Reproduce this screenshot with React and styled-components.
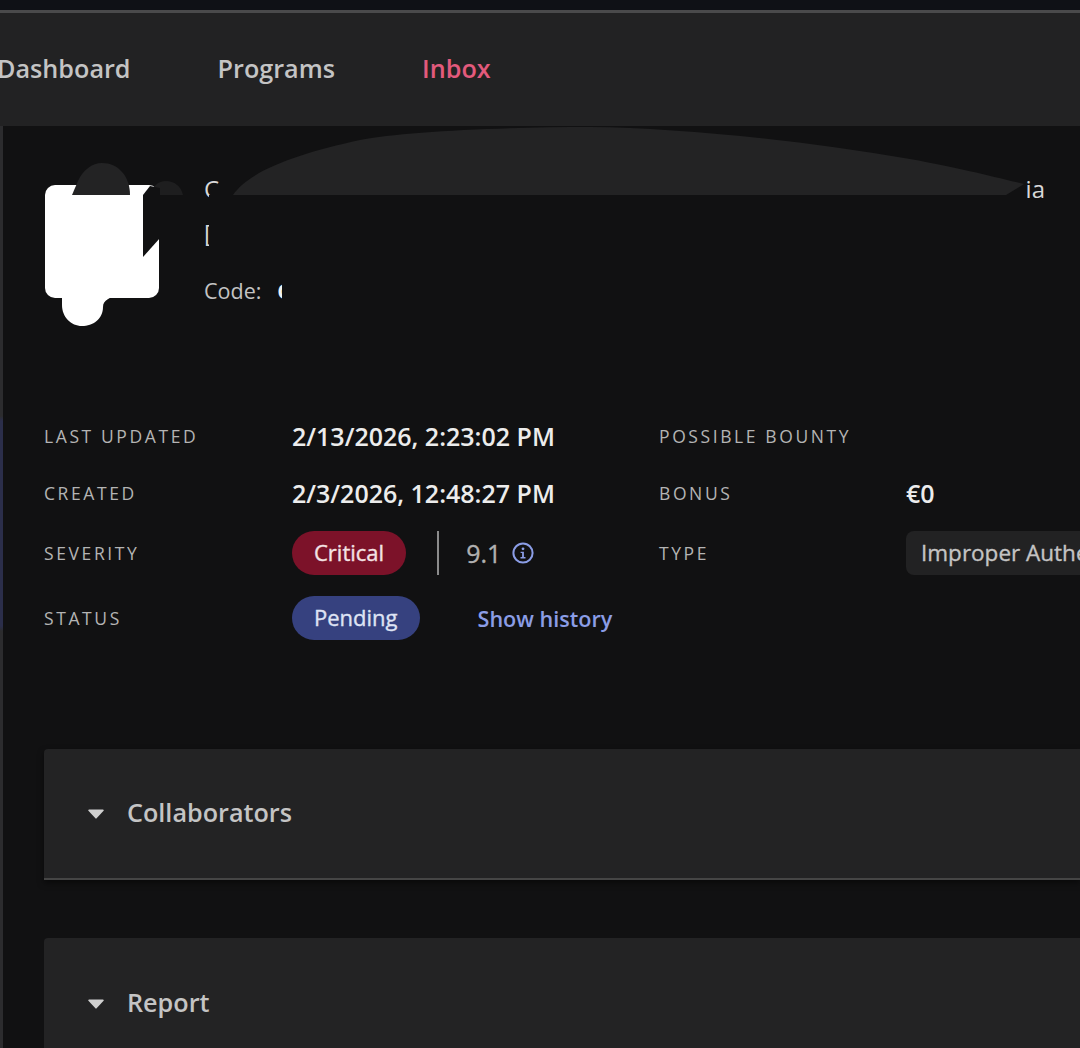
import React from "react";
import styled, { createGlobalStyle } from "styled-components";

const GlobalStyle = createGlobalStyle`
  html, body {
    margin: 0;
    background: #111112;
  }
  body {
    font-family: "Open Sans", "Noto Sans", sans-serif;
  }
`;

const Page = styled.div`
  width: 1080px;
  height: 1048px;
  overflow: hidden;
  display: flex;
  flex-direction: column;
`;

const TopStrip = styled.div`
  height: 10px;
  flex: none;
  background: #0f1116;
`;

const NavBar = styled.nav`
  height: 109px;
  flex: none;
  display: flex;
  align-items: center;
  gap: 87px;
  padding-bottom: 4px;
  border-top: 3px solid #4a4a4b;
  background: #222223;
`;

const NavLink = styled.a`
  font-size: 25.2px;
  font-weight: 600;
  color: ${(p) => (p.$active ? "#e35a7c" : "#c4c4c4")};

  &:first-child {
    margin-left: -3px;
  }
`;

const Body = styled.div`
  flex: 1;
  display: flex;
`;

const Rail = styled.div`
  width: 3px;
  flex: none;
  background: linear-gradient(
    #2c2c2e 0,
    #2c2c2e 290px,
    #2b2e4a 295px,
    #2b2e4a 500px,
    #2c2c2e 505px
  );
`;

const Content = styled.main`
  position: relative;
  flex: 1;
  min-width: 0;
  padding-left: 41px;
`;

const Hero = styled.header`
  display: flex;
  gap: 45px;
  padding-top: 59px;
  padding-left: 1px;
  height: 233px;
  box-sizing: border-box;
`;

const LogoMark = styled.svg`
  display: block;
  flex: none;
  width: 114px;
  height: 142px;
`;

const HeroText = styled.div`
  flex: 1;
  min-width: 0;
  display: flex;
  flex-direction: column;
  color: #d8d8d8;
`;

const TitleLine = styled.div`
  display: flex;
  justify-content: space-between;
  height: 44px;
  padding-right: 35px;
  margin-top: -12px;
  font-size: 24px;
  line-height: 32px;
`;

const SubLine = styled.div`
  height: 60px;
  font-size: 24px;
  line-height: 32px;
`;

const CodeLine = styled.div`
  display: flex;
  gap: 16px;
  font-size: 21.5px;
  line-height: 28px;
  color: #c4c4c4;
`;

const CodeStart = styled.span`
  font-weight: 700;
  color: #f0f0f0;
`;

const Redactions = styled.svg`
  position: absolute;
  left: -3px;
  top: 0;
  width: 1080px;
  height: 220px;
  pointer-events: none;
`;

const Details = styled.section`
  display: grid;
  grid-template-columns: 248px 367px 247px 1fr;
  grid-template-rows: 36px 35px 44px 44px;
  row-gap: 21px;
  margin-top: 59px;
  align-items: center;
`;

const Label = styled.div`
  font-size: 17.5px;
  letter-spacing: 2.6px;
  color: #b4b4b4;
  white-space: nowrap;
`;

const Value = styled.div`
  font-size: 25px;
  font-weight: 600;
  color: #ececec;
  white-space: nowrap;
`;

const ValueRow = styled.div`
  display: flex;
  align-items: center;
`;

const Pill = styled.span`
  display: inline-flex;
  align-items: center;
  height: 44px;
  padding: 0 22px 2px;
  box-sizing: border-box;
  border-radius: 22px;
  font-size: 22px;
  -webkit-text-stroke: 0.35px currentColor;
  background: ${(p) => (p.$tone === "critical" ? "#7c1229" : "#36417f")};
  color: ${(p) => (p.$tone === "critical" ? "#f4e3e5" : "#dfe3f4")};
`;

const Divider = styled.span`
  width: 2px;
  height: 44px;
  margin: 0 27px 0 31px;
  background: #8b8b8b;
`;

const Score = styled.span`
  font-size: 25px;
  -webkit-text-stroke: 0.35px currentColor;
  color: #b0b0b0;
`;

const InfoIcon = styled.svg`
  width: 22px;
  height: 22px;
  margin-left: 11px;
`;

const HistoryLink = styled.a`
  margin-left: 58px;
  font-size: 21.6px;
  font-weight: 600;
  color: #8b9de6;
`;

const TypeChip = styled.div`
  display: flex;
  align-items: center;
  height: 44px;
  padding: 0 15px 2px;
  box-sizing: border-box;
  border-radius: 8px 0 0 8px;
  background: #222223;
  font-size: 22.5px;
  -webkit-text-stroke: 0.35px currentColor;
  color: #c4c4c4;
  white-space: nowrap;
  overflow: hidden;
`;

const Sections = styled.div`
  display: flex;
  flex-direction: column;
  gap: 58px;
  margin-top: 109px;
`;

const Card = styled.section`
  display: flex;
  align-items: center;
  gap: 23px;
  height: 131px;
  flex: none;
  padding-left: 44px;
  box-sizing: border-box;
  border-radius: 4px 0 0 0;
  border-bottom: ${(p) => (p.$closed ? "2px solid #454545" : "0")};
  background: #232324;
  box-shadow: ${(p) => (p.$closed ? "0 3px 6px rgba(0, 0, 0, 0.5)" : "none")};
`;

const Caret = styled.svg`
  width: 16px;
  height: 10px;
  flex: none;
`;

const CardTitle = styled.h2`
  margin: 0;
  padding-bottom: 4px;
  font-size: 25.2px;
  font-weight: 600;
  color: #c4c4c4;
`;

function DownCaret() {
  return (
    <Caret viewBox="0 0 16 10">
      <path d="M1 0.5h14a.8.8 0 0 1 .6 1.3L8.6 9.3a.8.8 0 0 1-1.2 0L.4 1.8A.8.8 0 0 1 1 .5z" fill="#cfcfcf" />
    </Caret>
  );
}

export default function App() {
  return (
    <Page>
      <GlobalStyle />
      <TopStrip />
      <NavBar>
        <NavLink>Dashboard</NavLink>
        <NavLink>Programs</NavLink>
        <NavLink $active>Inbox</NavLink>
      </NavBar>
      <Body>
        <Rail />
        <Content>
          <Hero>
            <LogoMark viewBox="0 0 114 142">
              <rect x="0" y="0" width="114" height="113" rx="10" fill="#fff" />
              <path d="M17 108H75C65 113 58 115 58 122C58 134 48 141 37 141C26 141 17 132 17 120z" fill="#fff" />
            </LogoMark>
            <HeroText>
              <TitleLine>
                <span>C</span>
                <span>ia</span>
              </TitleLine>
              <SubLine>[</SubLine>
              <CodeLine>
                <span>Code:</span>
                <CodeStart>C</CodeStart>
              </CodeLine>
            </HeroText>
          </Hero>
          {/* scribbled-over parts of the screenshot */}
          <Redactions viewBox="0 0 1080 220">
            <path d="M233 69C250 44 300 27 360 14 C400 6 500 1 590 1 C680 2 800 14 910 33 C960 42 990 50 1024 58 L1006 69z" fill="#232324" />
            <path d="M72 69L78 55C83 44 92 37 102 37C118 37 130 50 130 69z" fill="#232324" />
            <path d="M150 69C153 60 158 55 166 55C174 55 181 60 183 69z" fill="#1e1e1f" />
            <path d="M143 69L150 60L160 62V112L143 131z" fill="#111112" />
            <rect x="209" y="69" width="815" height="76" fill="#111112" />
            <rect x="282" y="150" width="220" height="40" fill="#111112" />
          </Redactions>
          <Details>
            <Label>LAST UPDATED</Label>
            <Value>2/13/2026, 2:23:02 PM</Value>
            <Label>POSSIBLE BOUNTY</Label>
            <div />

            <Label>CREATED</Label>
            <Value>2/3/2026, 12:48:27 PM</Value>
            <Label>BONUS</Label>
            <Value>€0</Value>

            <Label>SEVERITY</Label>
            <ValueRow>
              <Pill $tone="critical">Critical</Pill>
              <Divider />
              <Score>9.1</Score>
              <InfoIcon viewBox="0 0 22 22">
                <circle cx="11" cy="11" r="9.6" fill="none" stroke="#8b9de6" strokeWidth="2" />
                <circle cx="11" cy="6.8" r="1.4" fill="#8b9de6" />
                <path d="M8.6 9.7h3.3v5.4h1.6v1.4H8.5v-1.4h1.6v-4H8.6z" fill="#8b9de6" />
              </InfoIcon>
            </ValueRow>
            <Label>TYPE</Label>
            <TypeChip>Improper Authentication</TypeChip>

            <Label>STATUS</Label>
            <ValueRow>
              <Pill $tone="pending">Pending</Pill>
              <HistoryLink>Show history</HistoryLink>
            </ValueRow>
          </Details>
          <Sections>
            <Card $closed>
              <DownCaret />
              <CardTitle>Collaborators</CardTitle>
            </Card>
            <Card>
              <DownCaret />
              <CardTitle>Report</CardTitle>
            </Card>
          </Sections>
        </Content>
      </Body>
    </Page>
  );
}
